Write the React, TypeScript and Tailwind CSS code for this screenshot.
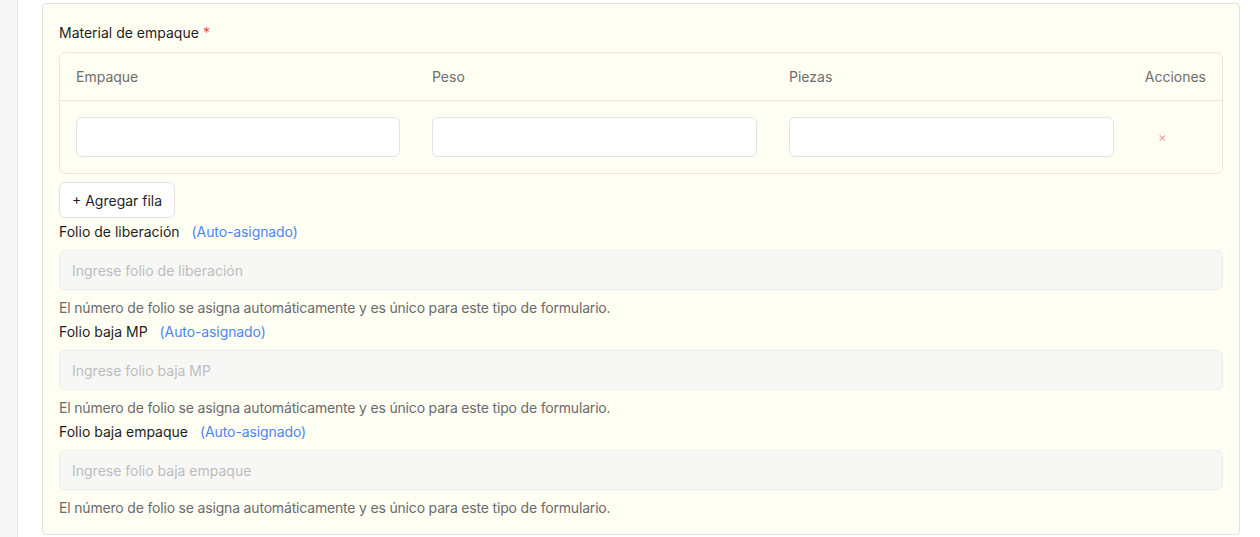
import React from "react";

const font = { fontFamily: "Inter, 'Noto Sans', sans-serif" };

function Folio({ label, placeholder }: { label: string; placeholder: string }) {
  return (
    <div className="flex flex-col">
      <div className="flex items-center h-[20px] text-[14px] text-[#1f1f1f]">
        <span>{label}</span>
        <span className="ml-3 text-[#4d86f0] tracking-[-0.1px]">(Auto-asignado)</span>
      </div>
      <div className="mt-[9px] h-[40px] rounded-md border border-[#ececec] bg-[#f7f8f6] flex items-center px-3 text-[14px] text-[#bdbdbd]">
        {placeholder}
      </div>
      <div className="mt-[8px] h-[18px] flex items-center text-[14px] tracking-[-0.18px] text-[#6b6b6b]">
        El número de folio se asigna automáticamente y es único para este tipo de formulario.
      </div>
    </div>
  );
}

export default function App() {
  return (
    <div className="w-[1260px] h-[537px] flex bg-white overflow-hidden" style={font}>
      <div className="w-[18px] h-full bg-[#f7f7f7] border-r border-[#e6e6e6]" />
      <div className="pl-[24px] pt-[3px]">
        <div className="w-[1198px] h-[532px] bg-[#fffef3] border border-[#e2e2e2] rounded-[4px] px-[16px] pt-[18px]">
          <div className="h-[20px] flex items-center text-[14px] text-[#1f1f1f]">
            Material de empaque<span className="ml-1 text-[#e5484d]">*</span>
          </div>
          <div className="mt-[10px] border border-[#e6e6e6] rounded-md">
            <div className="grid grid-cols-[356px_357px_357px_1fr] h-[48px] items-center text-[14px] text-[#6e6e6e] border-b border-[#e6e6e6]">
              <div className="pl-4">Empaque</div>
              <div className="pl-4">Peso</div>
              <div className="pl-4">Piezas</div>
              <div className="pr-4 text-right">Acciones</div>
            </div>
            <div className="grid grid-cols-[356px_357px_357px_1fr] h-[72px] items-center">
              <div className="px-4">
                <div className="h-[40px] bg-white border border-[#e3e3e3] rounded-md" />
              </div>
              <div className="px-4">
                <div className="h-[40px] bg-white border border-[#e3e3e3] rounded-md" />
              </div>
              <div className="px-4">
                <div className="h-[40px] bg-white border border-[#e3e3e3] rounded-md" />
              </div>
              <div className="pl-[28px] flex items-center">
                <span className="text-[13px] leading-none text-[#f0a0a0]">×</span>
              </div>
            </div>
          </div>
          <button className="mt-[8px] h-[36px] px-[12px] bg-white border border-[#e3e3e3] rounded-md text-[14px] text-[#1f1f1f] flex items-center">
            + Agregar fila
          </button>
          <div className="mt-[3px] flex flex-col gap-[5px]">
            <Folio label="Folio de liberación" placeholder="Ingrese folio de liberación" />
            <Folio label="Folio baja MP" placeholder="Ingrese folio baja MP" />
            <Folio label="Folio baja empaque" placeholder="Ingrese folio baja empaque" />
          </div>
        </div>
      </div>
    </div>
  );
}
